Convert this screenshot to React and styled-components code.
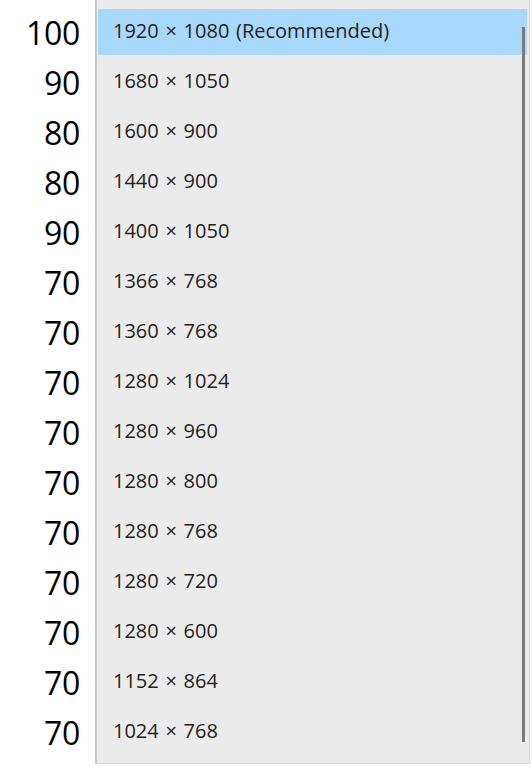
import React from 'react';
import styled, { createGlobalStyle } from 'styled-components';

const GlobalStyle = createGlobalStyle`
  html, body {
    margin: 0;
    padding: 0;
    background: #ffffff;
  }
`;

const Page = styled.div`
  display: flex;
  align-items: flex-start;
  width: 532px;
  height: 772px;
  overflow: hidden;
`;

const ScoreColumn = styled.div`
  width: 80px;
  padding-top: 8px;
  display: flex;
  flex-direction: column;
  align-items: flex-end;
`;

const Score = styled.div`
  height: 50px;
  line-height: 50px;
  font-family: 'Open Sans', 'Liberation Sans', sans-serif;
  font-size: 32px;
  letter-spacing: -0.3px;
  color: #000;
`;

const Panel = styled.div`
  position: relative;
  margin-left: 15px;
  width: 435px;
  height: 764px;
  box-sizing: border-box;
  background: #ebebeb;
  border-left: 2px solid #c9c9c9;
  border-right: 1px solid #d2d2d2;
  border-bottom: 1px solid #d6d6d6;
  padding: 9px 2px 0 1px;
  display: flex;
  flex-direction: column;
  gap: 4px;
`;

const Option = styled.div`
  height: 46px;
  line-height: 44px;
  padding-left: 15px;
  font-family: 'Open Sans', 'Noto Sans', sans-serif;
  font-size: 20px;
  word-spacing: 1.5px;
  color: #1f1f1f;
  background: ${p => (p.selected ? '#a9d8fd' : 'transparent')};
`;

const ScrollThumb = styled.div`
  position: absolute;
  top: 27px;
  right: 4px;
  width: 3px;
  height: 715px;
  background: #7b7b7b;
`;

const rows = [
  { score: 100, res: '1920 × 1080 (Recommended)' },
  { score: 90, res: '1680 × 1050' },
  { score: 80, res: '1600 × 900' },
  { score: 80, res: '1440 × 900' },
  { score: 90, res: '1400 × 1050' },
  { score: 70, res: '1366 × 768' },
  { score: 70, res: '1360 × 768' },
  { score: 70, res: '1280 × 1024' },
  { score: 70, res: '1280 × 960' },
  { score: 70, res: '1280 × 800' },
  { score: 70, res: '1280 × 768' },
  { score: 70, res: '1280 × 720' },
  { score: 70, res: '1280 × 600' },
  { score: 70, res: '1152 × 864' },
  { score: 70, res: '1024 × 768' },
];

export default function App() {
  return (
    <>
      <GlobalStyle />
      <Page>
        <ScoreColumn>
          {rows.map((r, i) => (
            <Score key={i}>{r.score}</Score>
          ))}
        </ScoreColumn>
        <Panel>
          {rows.map((r, i) => (
            <Option key={i} selected={i === 0}>
              {r.res}
            </Option>
          ))}
          <ScrollThumb />
        </Panel>
      </Page>
    </>
  );
}
